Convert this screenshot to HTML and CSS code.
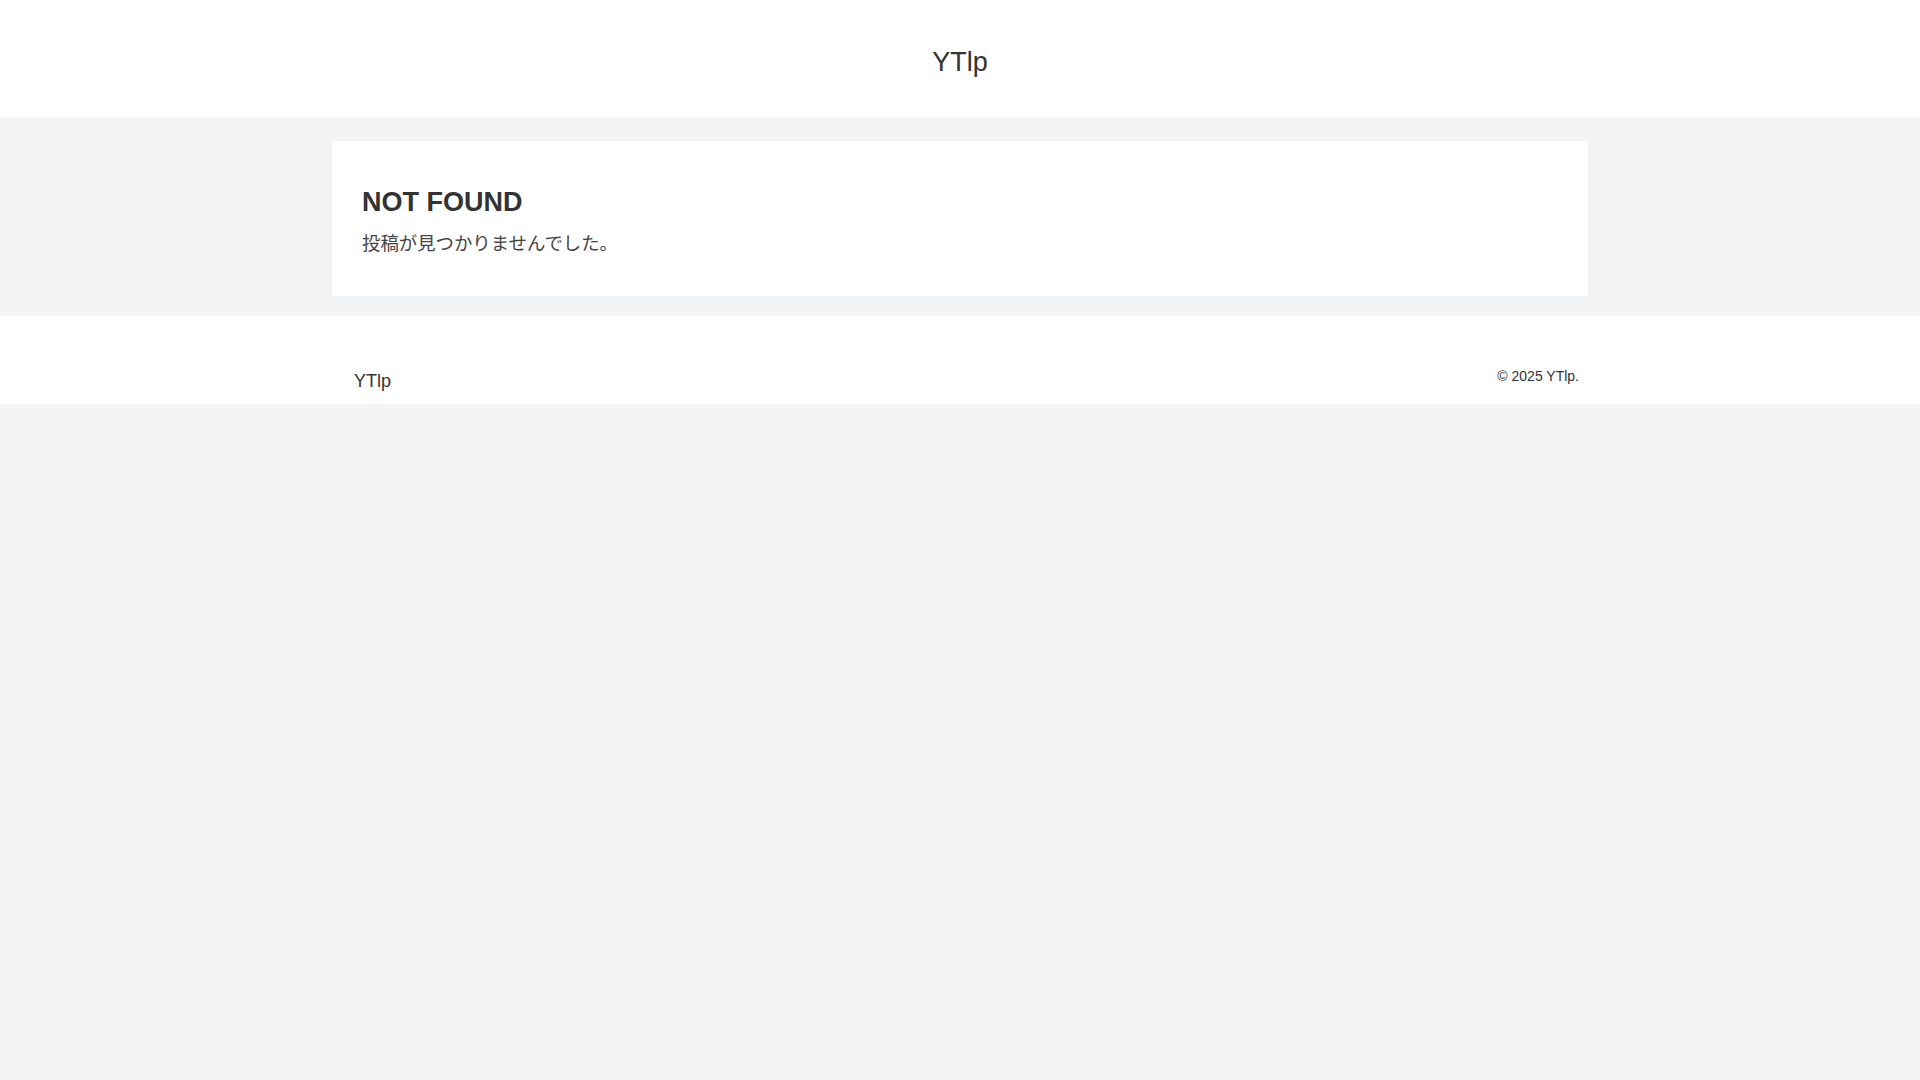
FILE: index.html
```html
<!DOCTYPE html>
<html lang="ja">
<head>
<meta charset="utf-8">
<title>YTlp</title>
<link rel="stylesheet" href="styles.css">
</head>
<body>
<header class="site-header">
  <a class="site-title" href="#">YTlp</a>
</header>
<main class="site-main">
  <article class="card">
    <h1 class="card-title">NOT FOUND</h1>
    <p class="card-text">投稿が見つかりませんでした。</p>
  </article>
</main>
<footer class="site-footer">
  <div class="footer-inner">
    <a class="footer-logo" href="#">YTlp</a>
    <p class="copyright">© 2025 YTlp.</p>
  </div>
</footer>
</body>
</html>
```

FILE: styles.css
```css
html, body {
  margin: 0;
  padding: 0;
}
body {
  background: #f3f4f6;
  color: #333;
  font-family: "Liberation Sans", Arial, "Noto Sans CJK JP", sans-serif;
}
a {
  color: inherit;
  text-decoration: none;
}
.site-header {
  background: #fff;
  height: 117px;
  display: flex;
  justify-content: center;
  align-items: flex-start;
}
.site-title {
  font-size: 27px;
  line-height: 32px;
  margin-top: 46px;
  color: #333;
}
.site-main {
  padding: 24px 0 20px;
}
.card {
  width: 1256px;
  box-sizing: border-box;
  margin: 0 auto;
  background: #fff;
  border-radius: 4px;
  padding: 30px 30px 30px;
  min-height: 155px;
}
.card-title {
  font-size: 27px;
  line-height: 32px;
  font-weight: 700;
  margin: 15px 0 12px;
  color: #333;
}
.card-text {
  font-size: 18.4px;
  line-height: 27px;
  margin: 0;
  color: #444;
}
.site-footer {
  background: #fff;
  height: 88px;
}
.footer-inner {
  width: 1256px;
  margin: 0 auto;
  box-sizing: border-box;
  padding: 52px 9px 0 22px;
  display: flex;
  justify-content: space-between;
  align-items: flex-start;
}
.footer-logo {
  font-size: 18px;
  line-height: 27px;
  color: #333;
}
.copyright {
  font-size: 14px;
  line-height: 21px;
  margin: -2px 0 0;
  color: #333;
}
```
